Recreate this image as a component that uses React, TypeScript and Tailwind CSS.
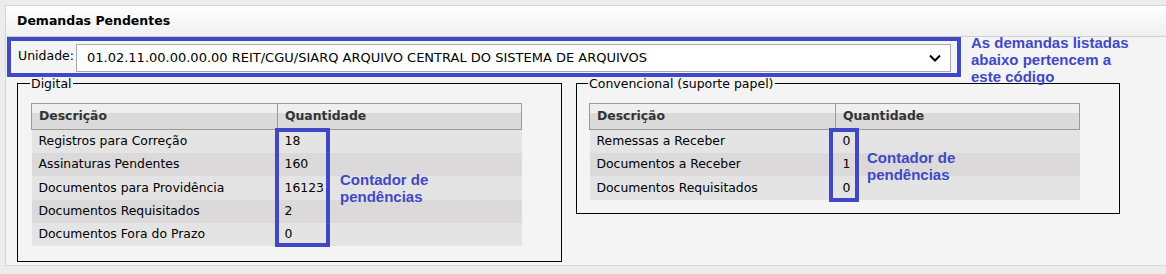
import { ReactNode } from "react";

type Row = { label: string; qty: number };

const digital: Row[] = [
  { label: "Registros para Correção", qty: 18 },
  { label: "Assinaturas Pendentes", qty: 160 },
  { label: "Documentos para Providência", qty: 16123 },
  { label: "Documentos Requisitados", qty: 2 },
  { label: "Documentos Fora do Prazo", qty: 0 },
];

const convencional: Row[] = [
  { label: "Remessas a Receber", qty: 0 },
  { label: "Documentos a Receber", qty: 1 },
  { label: "Documentos Requisitados", qty: 0 },
];

function DemandTable({ rows, children }: { rows: Row[]; children?: ReactNode }) {
  return (
    <div className="relative w-[491px]">
      <table className="w-full border-collapse text-[12.4px] text-black">
        <thead>
          <tr className="bg-[linear-gradient(#efefef_0%,#efefef_34%,#dadada_34%,#dadada_100%)]">
            <th className="h-[26px] w-[246px] border border-[#9a9a9a] pl-[7px] text-left font-bold text-[#333]">
              Descrição
            </th>
            <th className="h-[26px] border border-[#9a9a9a] pl-[7px] text-left font-bold text-[#333]">
              Quantidade
            </th>
          </tr>
        </thead>
        <tbody>
          {rows.map((r, i) => (
            <tr key={r.label} className={i % 2 === 0 ? "bg-[#e4e4e4]" : "bg-[#dbd9d9]"}>
              <td className="h-[23.4px] pl-[7px]">{r.label}</td>
              <td className="h-[23.4px] pl-[7px]">{r.qty}</td>
            </tr>
          ))}
        </tbody>
      </table>
      {children}
    </div>
  );
}

function Note({ children }: { children: ReactNode }) {
  return (
    <p className="font-['Liberation_Sans',Arial,sans-serif] text-[15px] font-bold leading-[17px] text-[#4048c8]">
      {children}
    </p>
  );
}

export default function App() {
  return (
    <div className="h-[274px] w-[1166px] overflow-hidden bg-[#ececec] pl-[5px] pt-[5px] font-['DejaVu_Sans',Verdana,sans-serif]">
      <div className="relative h-[261px] w-[1200px] border-b border-l border-t border-[#d6d6d6] bg-[#f4f4f4]">
        {/* panel title */}
        <div className="flex h-[31px] items-center border-b border-[#cfcfcf] bg-[linear-gradient(#ffffff,#f0f0f0)] pl-[11px]">
          <h2 className="text-[12.5px] font-bold text-black">Demandas Pendentes</h2>
        </div>

        {/* unit selector */}
        <div className="ml-[1px] flex h-[40px] w-[954px] items-end border-4 border-[#4048c8] bg-[#f4f4f4] pb-[1px]">
          <label className="w-[65px] pb-[6px] pl-[7px] text-[12.5px] text-black">Unidade:</label>
          <div className="flex h-[28px] w-[875px] items-center justify-between border border-[#a9a9a9] bg-white pl-[10px] pr-[9px] text-[13px] text-black">
            <span>01.02.11.00.00.00.00 REIT/CGU/SIARQ ARQUIVO CENTRAL DO SISTEMA DE ARQUIVOS</span>
            <svg width="12" height="8" viewBox="0 0 12 8" fill="none">
              <path d="M1 1.5 6 6.5 11 1.5" stroke="#000" strokeWidth="2" />
            </svg>
          </div>
        </div>

        <div className="absolute left-[965px] top-[28px]">
          <Note>
            As demandas listadas
            <br />
            abaixo pertencem a
            <br />
            este código
          </Note>
        </div>

        {/* groups */}
        <div className="-mt-[1px] ml-[11px] flex items-start gap-[14px]">
          <fieldset className="h-[186px] w-[545px] border border-black pl-[13px] pt-[12px]">
            <legend className="-ml-[1px] px-[1px] text-[12.5px] leading-[15px] text-black">Digital</legend>
            <DemandTable rows={digital}>
              <div className="absolute left-[244px] top-[25px] h-[119px] w-[55px] border-4 border-[#4048c8]" />
              <div className="absolute left-[309px] top-[68px]">
                <Note>
                  Contador de
                  <br />
                  pendências
                </Note>
              </div>
            </DemandTable>
          </fieldset>

          <fieldset className="h-[138px] w-[544px] border border-black pl-[12px] pt-[12px]">
            <legend className="-ml-[1px] px-[1px] text-[12.5px] leading-[15px] text-black">
              Convencional (suporte papel)
            </legend>
            <DemandTable rows={convencional}>
              <div className="absolute left-[240px] top-[25px] h-[74px] w-[30px] border-4 border-[#4048c8]" />
              <div className="absolute left-[278px] top-[46px]">
                <Note>
                  Contador de
                  <br />
                  pendências
                </Note>
              </div>
            </DemandTable>
          </fieldset>
        </div>
      </div>
    </div>
  );
}
